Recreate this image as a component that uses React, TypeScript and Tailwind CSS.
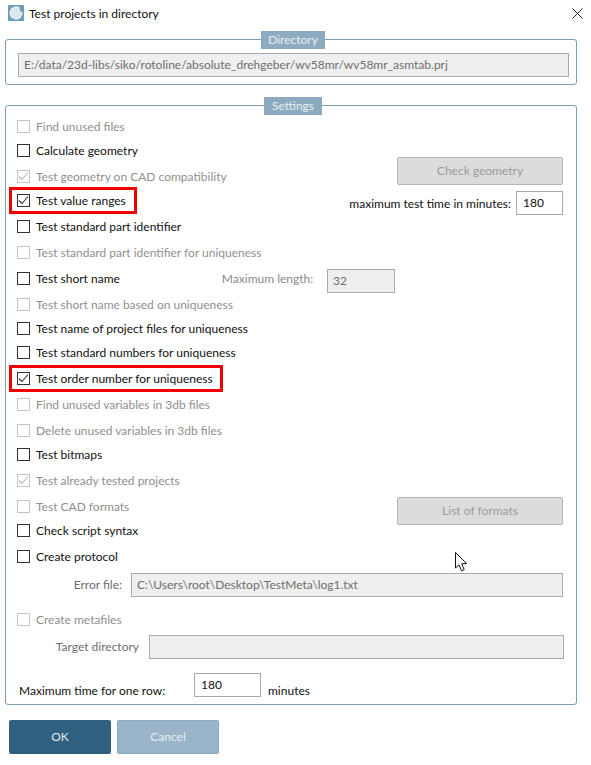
import React from "react";

const font = "font-['Lato','Open_Sans',sans-serif]";

function Check({ checked, disabled }: { checked?: boolean; disabled?: boolean }) {
  return (
    <span
      className={`flex h-[13px] w-[13px] shrink-0 items-center justify-center border bg-white ${
        disabled ? "border-[#c4c4c4]" : "border-[#333333]"
      }`}
    >
      {checked && (
        <svg width="11" height="11" viewBox="0 0 11 11" fill="none">
          <path d="M1 5.5 L4 8.5 L10 1.5" stroke={disabled ? "#b5b5b5" : "#333333"} strokeWidth="1.1" />
        </svg>
      )}
    </span>
  );
}

function Row({
  label,
  h,
  checked,
  disabled,
  highlight,
  children,
}: {
  label: string;
  h: string;
  checked?: boolean;
  disabled?: boolean;
  highlight?: string;
  children?: React.ReactNode;
}) {
  return (
    <div className={`relative flex items-start ${h}`}>
      <Check checked={checked} disabled={disabled} />
      <span className={`ml-[6px] whitespace-nowrap leading-[13px] ${disabled ? "text-[#8f8f8f]" : "text-[#111111]"}`}>{label}</span>
      {highlight && (
        <div className={`absolute top-[-7px] left-[-8px] h-[27px] border-[3px] border-[#f00000] ${highlight}`} />
      )}
      {children}
    </div>
  );
}

function GrayButton({ children, className }: { children: string; className: string }) {
  return (
    <div
      className={`flex h-[28px] w-[166px] shrink-0 items-center justify-center rounded-[2px] border border-[#b4b4b4] bg-[#dcdcdc] text-[#9a9a9a] ${className}`}
    >
      {children}
    </div>
  );
}

function Field({ children, className }: { children?: string; className: string }) {
  return (
    <div
      className={`flex h-[24px] shrink-0 items-center border border-[#a9a9a9] bg-[#efefef] pl-[5px] whitespace-nowrap text-[#6e6e6e] ${className}`}
    >
      {children}
    </div>
  );
}

function Legend({ children, className }: { children: string; className: string }) {
  return (
    <div
      className={`absolute top-[-9px] flex h-[18px] items-center justify-center bg-[#8dabc0] text-[#e8eef3] ${className}`}
    >
      {children}
    </div>
  );
}

export default function App() {
  return (
    <div className={`relative h-[765px] w-[591px] overflow-hidden bg-white text-[12px] leading-none ${font}`}>
      <div className="flex h-[26px] items-center pl-[8px]">
        <svg width="16" height="16" viewBox="0 0 16 16" className="shrink-0">
          <rect width="16" height="16" fill="#6f9fb8" />
          <circle cx="8" cy="8" r="5" fill="#dbe8ef" />
          <path d="M11.6 3.6 A5.7 5.7 0 1 0 13.6 7" stroke="#f4f8fa" strokeWidth="1.6" fill="none" />
        </svg>
        <span className="mt-[2px] ml-[5px] text-[#111111]">Test projects in directory</span>
        <svg width="11" height="11" viewBox="0 0 11 11" className="mr-[8px] ml-auto shrink-0">
          <path d="M0.5 0.5 L10.5 10.5 M10.5 0.5 L0.5 10.5" stroke="#222222" strokeWidth="1" />
        </svg>
      </div>

      <div className="relative mt-[13px] ml-[5px] h-[46px] w-[572px] rounded-[3px] border border-[#7d9fb5] pt-[13px] pl-[12px]">
        <Legend className="left-[255px] w-[64px]">Directory</Legend>
        <Field className="w-[551px]">E:/data/23d-libs/siko/rotoline/absolute_drehgeber/wv58mr/wv58mr_asmtab.prj</Field>
      </div>

      <div className="relative mt-[20px] ml-[5px] h-[600px] w-[572px] rounded-[3px] border border-[#7d9fb5] pt-[14px] pl-[11px]">
        <Legend className="left-[258px] w-[58px]">Settings</Legend>

        <Row h="h-[24px]" label="Find unused files" disabled />
        <Row h="h-[26px]" label="Calculate geometry" />
        <Row h="h-[24px]" label="Test geometry on CAD compatibility" checked disabled>
          <GrayButton className="-mt-[13px] mr-[13px] ml-auto">Check geometry</GrayButton>
        </Row>
        <Row h="h-[26px]" label="Test value ranges" checked highlight="w-[128px]">
          <span className="mt-[3px] ml-auto leading-[13px] text-[#111111]">maximum test time in minutes:</span>
          <div className="-mt-[3px] mr-[13px] ml-[5px] flex h-[24px] w-[47px] shrink-0 items-center border border-[#a9a9a9] pl-[6px] text-[#111111]">
            180
          </div>
        </Row>
        <Row h="h-[26px]" label="Test standard part identifier" />
        <Row h="h-[26px]" label="Test standard part identifier for uniqueness" disabled />
        <Row h="h-[26px]" label="Test short name">
          <span className="ml-[102px] leading-[13px] text-[#8a8a8a]">Maximum length:</span>
          <Field className="-mt-[3px] mr-[181px] ml-auto w-[68px]">32</Field>
        </Row>
        <Row h="h-[24px]" label="Test short name based on uniqueness" disabled />
        <Row h="h-[24px]" label="Test name of project files for uniqueness" />
        <Row h="h-[26px]" label="Test standard numbers for uniqueness" />
        <Row h="h-[26px]" label="Test order number for uniqueness" checked highlight="w-[214px]" />
        <Row h="h-[26px]" label="Find unused variables in 3db files" disabled />
        <Row h="h-[24px]" label="Delete unused variables in 3db files" disabled />
        <Row h="h-[26px]" label="Test bitmaps" />
        <Row h="h-[26px]" label="Test already tested projects" checked disabled />
        <Row h="h-[24px]" label="Test CAD formats" disabled>
          <GrayButton className="-mt-[3px] mr-[13px] ml-auto">List of formats</GrayButton>
        </Row>
        <Row h="h-[26px]" label="Check script syntax" />
        <Row h="h-[23px]" label="Create protocol" />

        <div className="flex h-[24px] items-center justify-end pr-[13px]">
          <span className="mr-[9px] text-[#6e6e6e]">Error file:</span>
          <Field className="w-[432px]">{"C:\\Users\\root\\Desktop\\TestMeta\\log1.txt"}</Field>
        </div>

        <div className="mt-[16px]">
          <Row h="h-[22px]" label="Create metafiles" disabled />
        </div>

        <div className="flex h-[24px] items-center justify-end pr-[12px]">
          <span className="mr-[10px] text-[#6e6e6e]">Target directory</span>
          <Field className="w-[415px]" />
        </div>

        <div className="mt-[14px] flex h-[24px] items-center pl-[2px] text-[#111111]">
          <span className="mt-[12px] w-[175px]">Maximum time for one row:</span>
          <div className="flex h-[24px] w-[67px] shrink-0 items-center border border-[#a9a9a9] pl-[6px]">180</div>
          <span className="mt-[12px] ml-[7px]">minutes</span>
        </div>
      </div>

      <div className="mt-[15px] flex gap-[6px] pl-[9px]">
        <div className="flex h-[34px] w-[102px] items-center justify-center rounded-[2px] bg-[#306080] text-[#e3ebf1]">OK</div>
        <div className="flex h-[34px] w-[102px] items-center justify-center rounded-[2px] border border-[#8aa9bf] bg-[#9ab5c9] text-[#e6edf2]">Cancel</div>
      </div>

      <svg width="14" height="21" viewBox="0 0 14 21" className="absolute top-[552px] left-[455px]">
        <path d="M0.5 0.5 V16 L4 12.8 L6.6 18.8 L9.2 17.6 L6.7 11.8 L11.5 11.5 Z" fill="#ffffff" stroke="#111111" strokeWidth="1" />
      </svg>
    </div>
  );
}
